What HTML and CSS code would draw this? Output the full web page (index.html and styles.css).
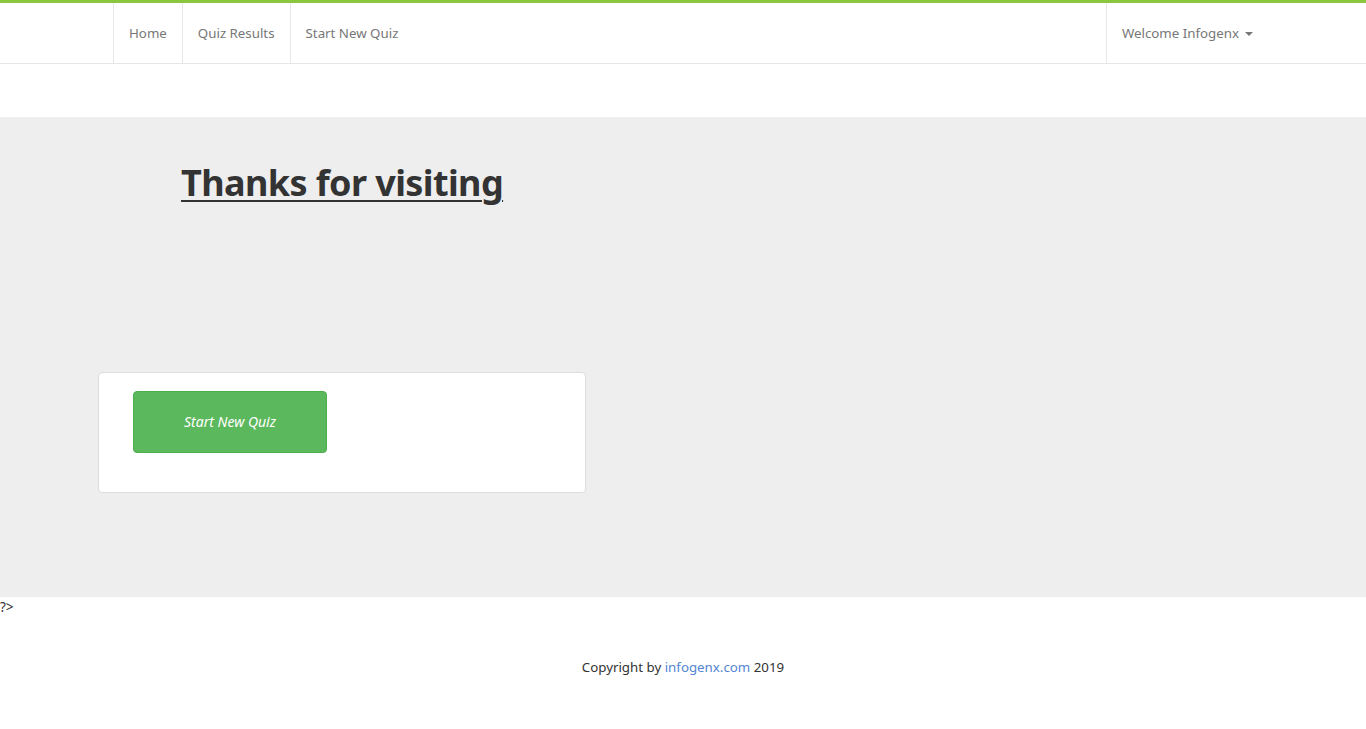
FILE: index.html
```html
<!DOCTYPE html>
<html>
<head>
<meta charset="utf-8">
<title>Thanks</title>
<link rel="stylesheet" href="styles.css">
</head>
<body>
<nav class="navbar">
  <div class="container nav-inner">
    <ul class="nav nav-left">
      <li><a href="#">Home</a></li>
      <li><a href="#">Quiz Results</a></li>
      <li><a href="#">Start New Quiz</a></li>
    </ul>
    <ul class="nav nav-right">
      <li><a href="#">Welcome Infogenx <span class="caret"></span></a></li>
    </ul>
  </div>
</nav>
<section class="band">
  <h1 class="title">Thanks for visiting</h1>
  <div class="card">
    <a class="btn" href="#">Start New Quiz</a>
  </div>
</section>
<div class="stray">?&gt;</div>
<footer class="footer">Copyright by <a href="#">infogenx.com</a> 2019</footer>
</body>
</html>
```
FILE: styles.css
```css
* { box-sizing: border-box; }
html, body { margin: 0; padding: 0; }
body {
  font-family: "Noto Sans", "Open Sans", sans-serif;
  font-size: 13.3px;
  color: #333;
  background: #fff;
}
a { text-decoration: none; }
.navbar {
  border-top: 3px solid #8cc63f;
  border-bottom: 1px solid #e7e7e7;
  height: 64px;
  background: #fff;
}
.container {
  width: 1140px;
  margin: 0 auto;
}
.nav-inner {
  display: flex;
  justify-content: space-between;
  height: 60px;
}
.nav {
  list-style: none;
  margin: 0;
  padding: 0;
  display: flex;
}
.nav-right { margin-right: -15px; }
.nav li { border-left: 1px solid #e7e7e7; }
.nav a {
  display: flex;
  align-items: center;
  height: 60px;
  padding: 0 15px;
  color: #777;
  font-size: 13.3px;
}
.caret {
  display: inline-block;
  width: 0;
  height: 0;
  margin-left: 6px;
  margin-top: 2px;
  border-top: 4px solid #777;
  border-left: 4px solid transparent;
  border-right: 4px solid transparent;
}
.band {
  margin-top: 53px;
  background: #eee;
  height: 480px;
  padding-top: 43px;
}
.title {
  margin: 0 0 0 181px;
  font-size: 36px;
  font-weight: 700;
  letter-spacing: -0.6px;
  line-height: 1.3;
  color: #333;
  text-decoration: underline;
  text-decoration-thickness: 2px;
  text-underline-offset: 4px;
  display: inline-block;
}
.card {
  margin: 165px 0 0 98px;
  width: 488px;
  height: 121px;
  background: #fff;
  border: 1px solid #ddd;
  border-radius: 4px;
  padding: 18px 0 0 34px;
}
.btn {
  display: flex;
  align-items: center;
  justify-content: center;
  width: 194px;
  height: 62px;
  background: #5cb85c;
  border: 1px solid #4cae4c;
  border-radius: 4px;
  color: #fff;
  font-style: italic;
  font-size: 14px;
}
.stray {
  font-size: 13.5px;
  color: #333;
  line-height: 20px;
}
.footer {
  text-align: center;
  margin-top: 41px;
  font-size: 13.3px;
  line-height: 19px;
  color: #333;
}
.footer a { color: #5386d3; }
```
